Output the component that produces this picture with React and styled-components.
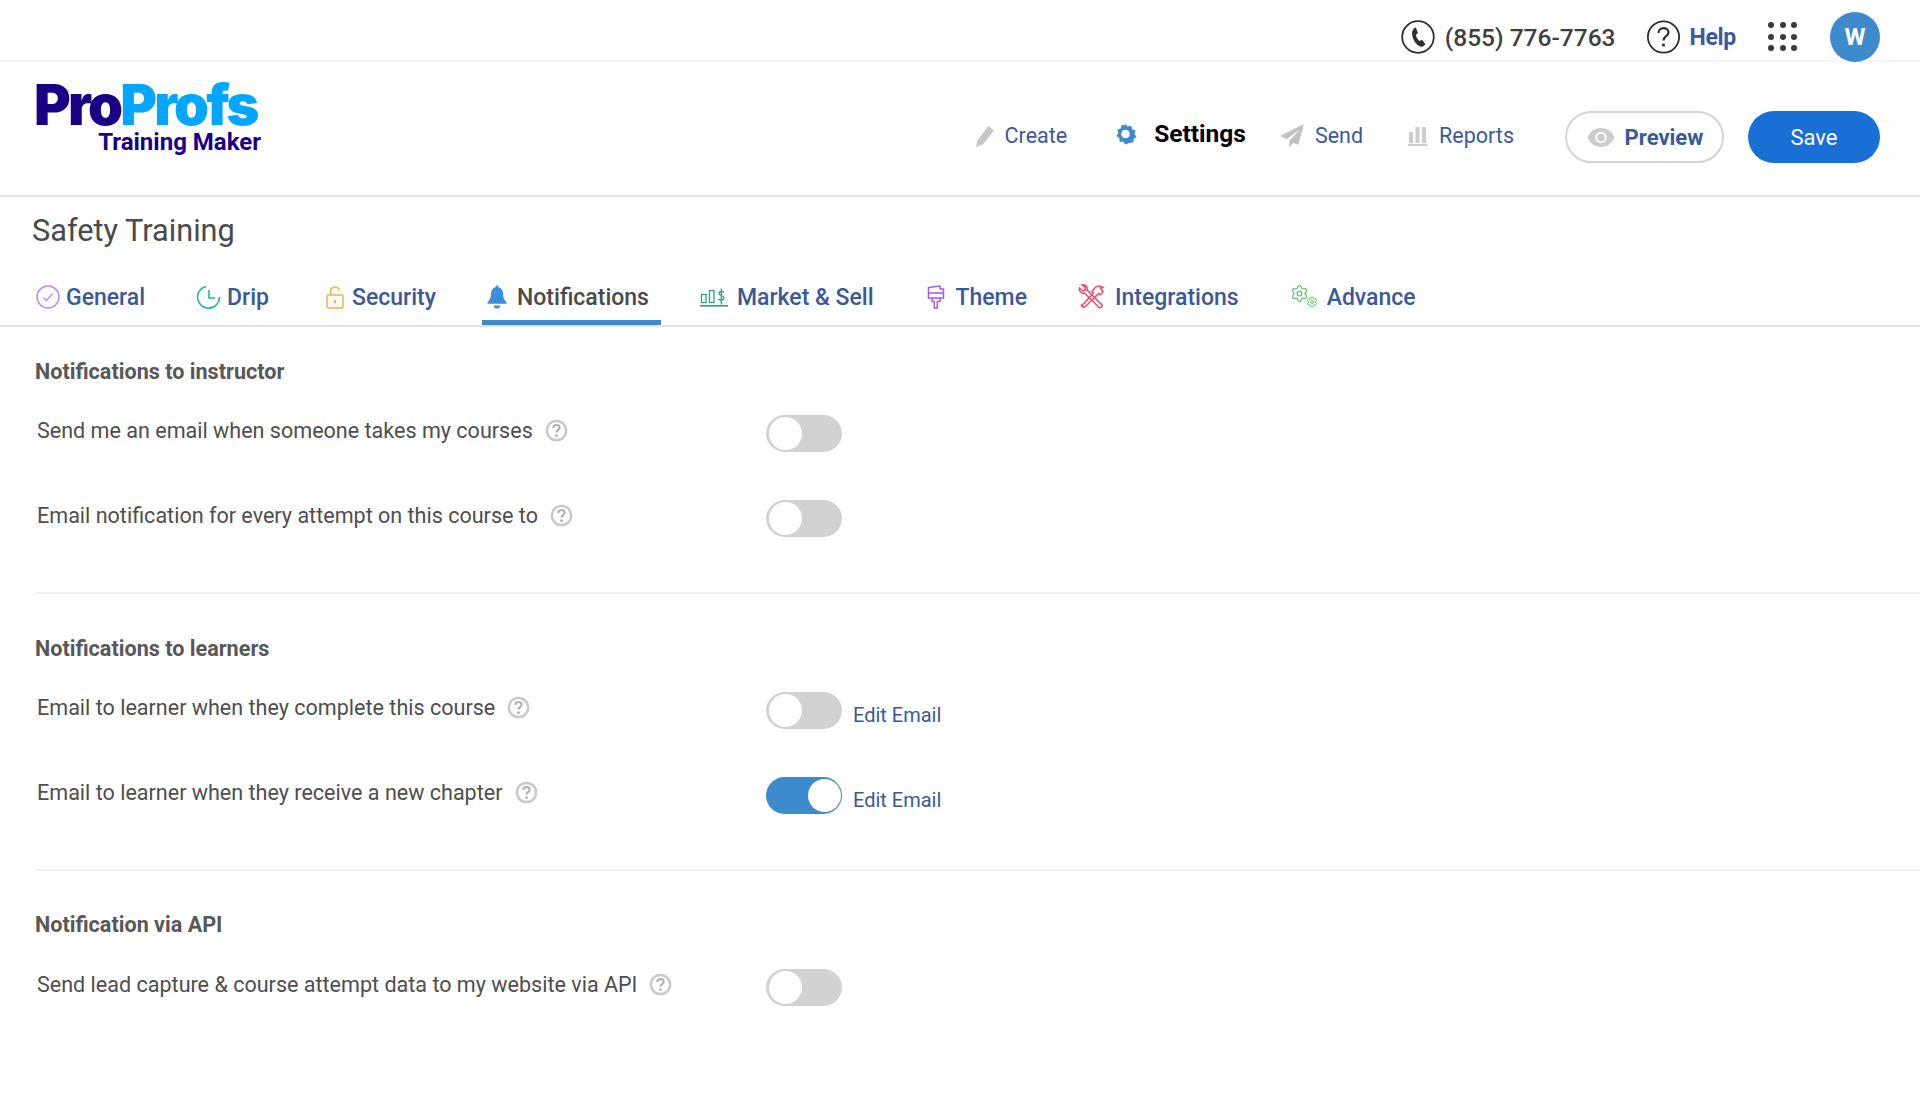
import React from "react";
import styled, { createGlobalStyle } from "styled-components";
import { Settings } from "lucide-react";

const Global = createGlobalStyle`
  html, body { margin: 0; padding: 0; background: #fff; }
  body { font-family: Roboto, "Liberation Sans", sans-serif; color: #555; overflow: hidden; }
  * { box-sizing: border-box; }
`;

const Page = styled.div`width: 1920px; height: 1101px; background: #fff; overflow: hidden;`;

const TopBar = styled.div`
  height: 62px; display: flex; align-items: flex-start; justify-content: flex-end;
  padding: 12px 40px 0 0; overflow: hidden; box-shadow: inset 0 -6px 6px -6px #e6e6e6;
`;
const Phone = styled.div`
  display: flex; align-items: center; gap: 10px; height: 50px; margin-right: 31px;
  font-size: 24.5px; font-weight: 500; color: #3f3f3f;
`;
const Help = styled.div`
  display: flex; align-items: center; gap: 10px; height: 50px; margin-right: 32px;
  font-size: 23px; font-weight: 700; color: #3b5998; letter-spacing: -0.3px;
`;
const Dots = styled.div`
  display: grid; grid-template-columns: repeat(3, 6px); gap: 5.5px; margin: 10px 33px 0 0;
  span { width: 6px; height: 6px; border-radius: 50%; background: #3a3a3a; }
`;
const Avatar = styled.div`
  width: 50px; height: 50px; border-radius: 50%; background: #3d8bcd; color: #fff;
  display: flex; align-items: center; justify-content: center; font-size: 24px; font-weight: 700;
`;

const Nav = styled.div`
  height: 135px; border-bottom: 2px solid #e6e6e6; display: flex; align-items: flex-start;
  padding: 0 40px 0 34px; justify-content: space-between;
`;
const Logo = styled.div`
  width: 227px; margin-top: 20px; display: flex; flex-direction: column; align-items: flex-end;
`;
const LogoMark = styled.div`
  font-family: Inter, sans-serif; font-weight: 900; font-size: 56px; line-height: 46px; letter-spacing: -2.7px;
  color: #1a0085; white-space: nowrap; align-self: flex-start;
  span { color: #00a6ff; }
`;
const LogoSub = styled.div`
  font-size: 24px; font-weight: 700; line-height: 24px; color: #1a0085; margin: 2px 0 0 0; white-space: nowrap;
`;
const NavRight = styled.div`display: flex; align-items: center; height: 100px; margin-top: 25px;`;
const NavItem = styled.div`
  display: flex; align-items: center; gap: ${p => p.$gap}px; margin-right: ${p => p.$after}px;
  font-size: ${p => (p.$active ? 24.5 : 21.5)}px; font-weight: ${p => (p.$active ? 700 : 400)};
  color: ${p => (p.$active ? "#000" : "#3b5998")};
  margin-top: ${p => (p.$active ? -7 : -3)}px;
`;
const Pill = styled.div`
  height: 52px; border-radius: 26px; display: flex; align-items: center; justify-content: center;
`;
const Preview = styled(Pill)`
  width: 159px; border: 2px solid #d4d4d4; gap: 9px; font-size: 22px; font-weight: 700; color: #3b5998; margin-right: 24px;
`;
const Save = styled(Pill)`width: 132px; background: #1a6fd4; color: #fff; font-size: 22px; font-weight: 400;`;

const TitleBar = styled.div`
  font-size: 30.7px; line-height: 36px; color: #4a4a4a; padding: 16px 0 0 32px;
`;
const Tabs = styled.div`
  display: flex; height: 78px; padding: 0 0 0 36px; border-bottom: 2px solid #e2e2e2;
`;
const Tab = styled.div`
  display: flex; align-items: center; height: 76px; padding-top: 25px; gap: ${p => p.$gap}px;
  margin-right: ${p => p.$after}px; font-size: 23px; font-weight: 500;
  color: ${p => (p.$active ? "#4a4a4a" : "#3b5998")}; white-space: nowrap;
  border-bottom: 5px solid ${p => (p.$active ? "#3d8bcd" : "transparent")};
  ${p => p.$active && "margin-left: -5px; padding-left: 5px; padding-right: 12px;"}
`;

const Section = styled.section`
  margin-left: 36px; padding-top: ${p => p.$top}px; padding-bottom: ${p => p.$bottom}px;
  border-bottom: ${p => (p.$last ? "none" : "2px solid #efefef")};
`;
const Heading = styled.h2`
  margin: 0 0 0 -1px; font-size: 21.6px; line-height: 26px; font-weight: 700; color: #585858;
`;
const Row = styled.div`
  display: flex; align-items: flex-start; height: 37px; margin-top: ${p => p.$top}px;
`;
const LabelWrap = styled.div`
  width: 730px; display: flex; align-items: center; height: 30px; gap: 12px; padding-left: 1px; flex: none;
  font-size: 21.55px; color: #4e4e4e;
`;
const Toggle = styled.div`
  position: relative; width: 76px; height: 37px; border-radius: 19px; flex: none;
  background: ${p => (p.$on ? "#3d8bcd" : "#d2d2d2")};
  &::after {
    content: ""; position: absolute; top: 2px; ${p => (p.$on ? "right: 1px;" : "left: 3px;")}
    width: 33px; height: 33px; border-radius: 50%; background: #fff;
  }
`;
const EditLink = styled.a`
  font-size: 20px; color: #3b5998; margin: 10px 0 0 11px; line-height: 26px;
`;

const QMark = () => (
  <svg width="23" height="23" viewBox="0 0 22 22" fill="none">
    <circle cx="11" cy="11" r="9.2" stroke="#c9c9c9" strokeWidth="2.4" />
    <path d="M8 8.6c0-1.800 1.400-2.800 3-2.800s3 1 3 2.600c0 2.200-3 2.200-3 4.600" stroke="#b0b0b0" strokeWidth="2" fill="none" />
    <circle cx="11" cy="16" r="1.3" fill="#b0b0b0" />
  </svg>
);
const PhoneIcon = () => (
  <svg width="34" height="34" viewBox="0 0 34 34" fill="none">
    <circle cx="17" cy="17" r="15.8" stroke="#2e2e2e" strokeWidth="1.8" />
    <path d="M11.600 8.600l3.200-1 2.200 5.400-2.200 1.800c.5 2.600 1.900 4.900 3.800 6.300l2.500-1.300 3.400 4.500-2.600 2.100c-1.600.8-3.300.2-4.600-.8-3.600-2.900-6.200-7.700-6.300-12.600 0-1.800 1.100-3.500 2.600-4.400z" fill="#2e2e2e" />
  </svg>
);
const HelpIcon = () => (
  <svg width="33" height="34" viewBox="0 0 33 34" fill="none">
    <circle cx="16.5" cy="17" r="15.6" stroke="#2e2e2e" strokeWidth="1.8" />
    <path d="M11.500 13c0-3 2.300-4.800 5-4.800s5 1.700 5 4.400c0 3.600-5 3.600-5 7.800" stroke="#2e2e2e" strokeWidth="2.2" fill="none" />
    <circle cx="16.5" cy="25" r="1.6" fill="#2e2e2e" />
  </svg>
);
const PencilIcon = () => (
  <svg width="21" height="24" viewBox="0 0 21 24"><path d="M1 23l1.500-7L13.500 2l5.500 4.500L8 20.500z" fill="#c6c6c6" /></svg>
);
const GearIcon = () => (
  <svg width="23" height="24" viewBox="0 0 24 24">
    <path fillRule="evenodd" fill="#3d8bcd" d="M12 1l2.200 3.100 3.700-.7 1 3.600 3.600 1.400-1 3.600 2 3-3 2.200-.3 3.700-3.800.1L12 23l-2.400-2.900-3.800-.1-.3-3.700-3-2.200 2-3-1-3.600L7.100 6l1-3.600 3.700.7z M12 7.500a4.500 4.500 0 1 0 0 9 4.500 4.500 0 0 0 0-9z" />
  </svg>
);
const SendIcon = () => (
  <svg width="24" height="25" viewBox="0 0 23 24"><path d="M23 1L0 12.500l6.500 3L19 6 9 17l0 6.500 4-4.500 4.500 2z" fill="#c2c2c2" /></svg>
);
const BarsIcon = () => (
  <svg width="19" height="20" viewBox="0 0 19 20" fill="#cdcdcd">
    <rect x="1" y="6" width="4" height="11" /><rect x="7.500" y="1" width="4" height="16" /><rect x="14" y="1" width="4" height="16" /><rect x="0" y="18" width="19" height="2" />
  </svg>
);
const EyeIcon = () => (
  <svg width="30" height="21" viewBox="0 0 28 20">
    <path fillRule="evenodd" fill="#cccccc" d="M14 1C8 1 3.500 4.500 1 10c2.500 5.500 7 9 13 9s10.500-3.500 13-9C24.500 4.500 20 1 14 1zm0 3.500a5.500 5.500 0 1 1 0 11 5.500 5.500 0 0 1 0-11z" />
    <circle cx="14" cy="10" r="3.500" fill="#cccccc" />
  </svg>
);
const CheckCircle = () => (
  <svg width="24" height="24" viewBox="0 0 24 24" fill="none">
    <circle cx="12" cy="12" r="11" stroke="#b388f5" strokeWidth="1.4" />
    <path d="M7.500 12.500l3 3 6-7" stroke="#b388f5" strokeWidth="1.2" />
  </svg>
);
const ClockIcon = () => (
  <svg width="24" height="24" viewBox="0 0 24 24" fill="none">
    <path d="M9 1.500A11 11 0 1 0 22.500 12" stroke="#22b3a0" strokeWidth="1.6" />
    <path d="M12 5v8h6" stroke="#22b3a0" strokeWidth="1.600" />
  </svg>
);
const LockIcon = () => (
  <svg width="18" height="23" viewBox="0 0 18 23" fill="none">
    <rect x="1" y="9" width="16" height="13" rx="1.500" stroke="#f7ad47" strokeWidth="1.500" />
    <path d="M4.500 9V5.500a4.300 4.300 0 0 1 8.500-1" stroke="#f7ad47" strokeWidth="1.500" />
    <path d="M9 14v3" stroke="#f7ad47" strokeWidth="2" />
  </svg>
);
const BellIcon = () => (
  <svg width="20" height="24" viewBox="0 0 19 22">
    <path d="M9.500 0c1 0 1.500.8 1.500 1.800 3 .8 4.200 3.200 4.200 6.200 0 4 1.300 6 3.300 8v1.500H.500V16c2-2 3.300-4 3.300-8 0-3 1.200-5.400 4.200-6.200C8 .8 8.500 0 9.500 0z" fill="#3d8fdd" />
    <path d="M6.500 19h6a3 3 0 0 1-6 0z" fill="#3d8fdd" />
  </svg>
);
const MarketIcon = () => (
  <svg width="28" height="20" viewBox="0 0 28 20" fill="none" stroke="#2aa184" strokeWidth="1.300">
    <rect x="1.500" y="7.500" width="4.500" height="8" />
    <rect x="9.500" y="3.500" width="4.500" height="12" />
    <path d="M24 5.500c-.8-1.500-5-1.500-5 1s5 2 5 4.500-4.500 2.500-5.500.8M21.300 1.500v16" />
    <path d="M0 18.800h28" strokeWidth="1.600" />
  </svg>
);
const BrushIcon = () => (
  <svg width="19" height="24" viewBox="0 0 19 24" fill="none" stroke="#a45be6" strokeWidth="1.500">
    <path d="M2.500 2.500L14 1v3h3.500v9h-15zM2.500 8h15M6 13v3.500h2.300V23h3v-6.500H14V13" />
  </svg>
);
const ToolsIcon = () => (
  <svg width="27" height="26" viewBox="0 0 27 26" fill="none" stroke="#f0476b" strokeWidth="1.500">
    <path d="M1.500 4l3.500 3 2.500-1-.5-3L4 1c3-1 6 2 5 5l15 15c.8 1.500-1 3.500-3 2.500L6.500 9C3.500 10 .5 7 1.500 4z" />
    <path d="M3 22.500L15.500 9l-1.500-1.500 3-4c3-2 6-1.500 8 0l-2.500.5 2.500 4-3 3-1.500-1.500-13.500 13.500c-1.500 1-4-1-3-2.500z" />
  </svg>
);
const GearsIcon = () => (
  <svg width="28" height="26" viewBox="0 0 28 26" fill="none">
    <Settings x="0" y="0" width="19" height="19" color="#5cc66b" strokeWidth={1.6} />
    <Settings x="16" y="12" width="12" height="12" color="#5cc66b" strokeWidth={2} />
  </svg>
);

const tabs = [
  ["General", <CheckCircle />, 6, 52],
  ["Drip", <ClockIcon />, 6, 57],
  ["Security", <LockIcon />, 8, 51],
  ["Notifications", <BellIcon />, 10, 39],
  ["Market & Sell", <MarketIcon />, 9, 52],
  ["Theme", <BrushIcon />, 11, 51],
  ["Integrations", <ToolsIcon />, 10, 51],
  ["Advance", <GearsIcon />, 9, 0],
];

const SettingRow = ({ top, label, on, edit }) => (
  <Row $top={top}>
    <LabelWrap>{label}<QMark /></LabelWrap>
    <Toggle $on={on} />
    {edit && <EditLink>Edit Email</EditLink>}
  </Row>
);

export default function App() {
  return (
    <Page>
      <Global />
      <TopBar>
        <Phone><PhoneIcon />(855) 776-7763</Phone>
        <Help><HelpIcon />Help</Help>
        <Dots>{Array.from({ length: 9 }).map((_, i) => <span key={i} />)}</Dots>
        <Avatar>W</Avatar>
      </TopBar>
      <Nav>
        <Logo>
          <LogoMark>Pro<span>Profs</span></LogoMark>
          <LogoSub>Training Maker</LogoSub>
        </Logo>
        <NavRight>
          <NavItem $gap={9} $after={47}><PencilIcon />Create</NavItem>
          <NavItem $gap={17} $after={34} $active><GearIcon />Settings</NavItem>
          <NavItem $gap={11} $after={45}><SendIcon />Send</NavItem>
          <NavItem $gap={12} $after={51}><BarsIcon />Reports</NavItem>
          <Preview><EyeIcon />Preview</Preview>
          <Save>Save</Save>
        </NavRight>
      </Nav>
      <TitleBar>Safety Training</TitleBar>
      <Tabs>
        {tabs.map(([t, ic, gap, after]) => (
          <Tab key={t} $gap={gap} $after={after} $active={t === "Notifications"}>{ic}{t}</Tab>
        ))}
      </Tabs>
      <Section $top={32} $bottom={55}>
        <Heading>Notifications to instructor</Heading>
        <SettingRow top={30} label="Send me an email when someone takes my courses" />
        <SettingRow top={48} label="Email notification for every attempt on this course to" />
      </Section>
      <Section $top={42} $bottom={55}>
        <Heading>Notifications to learners</Heading>
        <SettingRow top={30} label="Email to learner when they complete this course" edit />
        <SettingRow top={48} label="Email to learner when they receive a new chapter" on edit />
      </Section>
      <Section $top={41} $bottom={0} $last>
        <Heading>Notification via API</Heading>
        <SettingRow top={31} label="Send lead capture & course attempt data to my website via API" />
      </Section>
    </Page>
  );
}
